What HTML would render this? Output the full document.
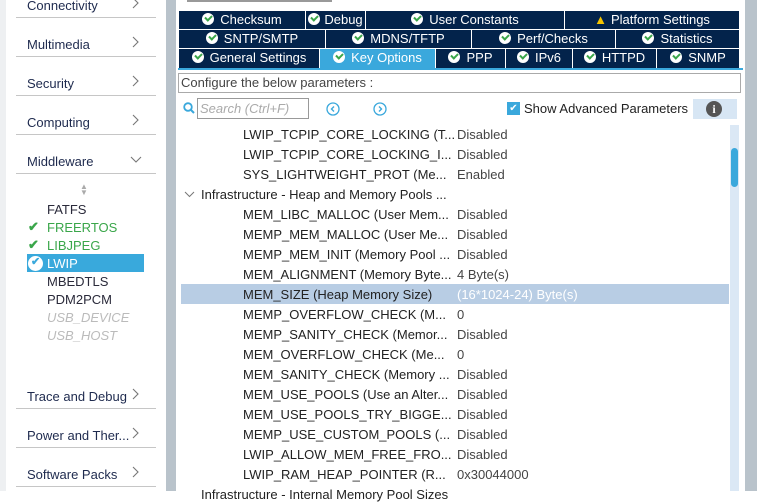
<!DOCTYPE html>
<html><head><style>
*{margin:0;padding:0;box-sizing:border-box}
body{width:757px;height:491px;overflow:hidden;background:#fff;font-family:"Liberation Sans",sans-serif;position:relative;font-size:13px;color:#333}
.a{position:absolute;white-space:nowrap}
.side{left:27px;color:#1e2a4e;font-size:13px}
.chev{left:132px}
.sl{left:16px;width:140px;height:1px;background:#c6c6c6}
.tab{position:absolute;height:18px;background:#03234b;color:#fff;font-size:13px;text-align:center;line-height:18px;border-right:1px solid #fff}
.ck{display:inline-block;width:12px;height:12px;border-radius:50%;background:#fff;vertical-align:-1px;margin-right:6px;position:relative}
.ck:after{content:"";position:absolute;left:3px;top:2px;width:5px;height:3px;border-left:2px solid #3aa64a;border-bottom:2px solid #3aa64a;transform:rotate(-45deg)}
.n{left:243px;color:#222}
.v{left:457px;color:#444}
.g{color:#3aa64a}
</style></head><body>
<div class="a" style="left:0;top:0;width:6px;height:491px;background:#eef0f2"></div>
<div class="a" style="left:166px;top:0;width:10px;height:491px;background:#b9c3cb"></div>
<div class="a" style="left:745px;top:0;width:12px;height:491px;background:#b9c3cb"></div>
<div class="a" style="left:187px;top:0;width:145px;height:2px;background:#999"></div>

<div class="a side" style="top:-2px">Connectivity</div><svg class="a chev" style="top:-3px" width="8" height="12"><path d="M1 1L6 6L1 11" fill="none" stroke="#777" stroke-width="1.1"/></svg>
<div class="a sl" style="top:17px"></div>
<div class="a side" style="top:37px">Multimedia</div><svg class="a chev" style="top:36px" width="8" height="12"><path d="M1 1L6 6L1 11" fill="none" stroke="#777" stroke-width="1.1"/></svg>
<div class="a sl" style="top:56px"></div>
<div class="a side" style="top:76px">Security</div><svg class="a chev" style="top:75px" width="8" height="12"><path d="M1 1L6 6L1 11" fill="none" stroke="#777" stroke-width="1.1"/></svg>
<div class="a sl" style="top:95px"></div>
<div class="a side" style="top:115px">Computing</div><svg class="a chev" style="top:114px" width="8" height="12"><path d="M1 1L6 6L1 11" fill="none" stroke="#777" stroke-width="1.1"/></svg>
<div class="a sl" style="top:134px"></div>
<div class="a side" style="top:154px">Middleware</div><svg class="a" style="left:130px;top:156px" width="12" height="8"><path d="M1 1L6 6L11 1" fill="none" stroke="#777" stroke-width="1.1"/></svg>
<div class="a sl" style="top:173px"></div>
<div class="a" style="left:80px;top:184px;font-size:8px;color:#aaa;line-height:6px">▲<br>▼</div>
<div class="a" style="left:47px;top:202px;color:#2a2a3a">FATFS</div>
<div class="a g" style="left:28px;top:219px;font-weight:bold">✔</div><div class="a g" style="left:47px;top:220px">FREERTOS</div>
<div class="a g" style="left:28px;top:237px;font-weight:bold">✔</div><div class="a g" style="left:47px;top:238px">LIBJPEG</div>
<div class="a" style="left:27px;top:254px;width:117px;height:18px;background:#39a9dc"></div>
<div class="a" style="left:28px;top:256px;width:15px;height:15px;border-radius:50%;background:#fff"></div>
<div class="a" style="left:31px;top:255px;color:#39a9dc;font-size:11px;font-weight:bold">✔</div>
<div class="a" style="left:47px;top:256px;color:#fff">LWIP</div>
<div class="a" style="left:47px;top:274px;color:#2a2a3a">MBEDTLS</div>
<div class="a" style="left:47px;top:292px;color:#2a2a3a">PDM2PCM</div>
<div class="a" style="left:47px;top:310px;color:#bbb;font-style:italic">USB_DEVICE</div>
<div class="a" style="left:47px;top:328px;color:#bbb;font-style:italic">USB_HOST</div>
<div class="a side" style="top:389px">Trace and Debug</div><svg class="a chev" style="top:388px" width="8" height="12"><path d="M1 1L6 6L1 11" fill="none" stroke="#777" stroke-width="1.1"/></svg>
<div class="a sl" style="top:408px"></div>
<div class="a side" style="top:428px">Power and Ther...</div><svg class="a chev" style="top:427px" width="8" height="12"><path d="M1 1L6 6L1 11" fill="none" stroke="#777" stroke-width="1.1"/></svg>
<div class="a sl" style="top:447px"></div>
<div class="a side" style="top:467px">Software Packs</div><svg class="a chev" style="top:466px" width="8" height="12"><path d="M1 1L6 6L1 11" fill="none" stroke="#777" stroke-width="1.1"/></svg>
<div class="a sl" style="top:486px"></div>

<div class="tab" style="left:179px;top:11px;width:127px"><span class="ck"></span>Checksum</div>
<div class="tab" style="left:306px;top:11px;width:60px"><span class="ck" style="margin-right:4px"></span>Debug</div>
<div class="tab" style="left:366px;top:11px;width:199px"><span class="ck"></span>User Constants</div>
<div class="tab" style="left:565px;top:11px;width:175px"><span style="color:#f5c400;margin-right:4px">▲</span>Platform Settings</div>
<div class="tab" style="left:179px;top:30px;width:147px"><span class="ck"></span>SNTP/SMTP</div>
<div class="tab" style="left:326px;top:30px;width:146px"><span class="ck"></span>MDNS/TFTP</div>
<div class="tab" style="left:472px;top:30px;width:144px"><span class="ck"></span>Perf/Checks</div>
<div class="tab" style="left:616px;top:30px;width:124px"><span class="ck"></span>Statistics</div>
<div class="tab" style="left:179px;top:49px;width:141px;height:19px"><span class="ck"></span>General Settings</div>
<div class="tab" style="left:320px;top:49px;width:116px;height:19px;background:#3aa8dc"><span class="ck"></span>Key Options</div>
<div class="tab" style="left:436px;top:49px;width:70px;height:19px"><span class="ck"></span>PPP</div>
<div class="tab" style="left:506px;top:49px;width:67px;height:19px"><span class="ck"></span>IPv6</div>
<div class="tab" style="left:573px;top:49px;width:84px;height:19px"><span class="ck"></span>HTTPD</div>
<div class="tab" style="left:657px;top:49px;width:83px;height:19px"><span class="ck"></span>SNMP</div>
<div class="a" style="left:178px;top:68px;width:565px;height:2px;background:#3aa8dc"></div>
<div class="a" style="left:178px;top:73px;width:563px;height:20px;border:1px solid #aaa;padding-left:2px;line-height:18px;color:#444">Configure the below parameters :</div>

<svg class="a" style="left:183px;top:102px" width="12" height="12"><circle cx="5" cy="5" r="3.8" fill="none" stroke="#3aa8dc" stroke-width="1.8"/><line x1="8" y1="8" x2="11" y2="11" stroke="#3aa8dc" stroke-width="2"/></svg>
<div class="a" style="left:197px;top:98px;width:112px;height:21px;border:1px solid #999;color:#aaa;font-style:italic;padding-left:2px;line-height:19px">Search (Ctrl+F)</div>
<svg class="a" style="left:326px;top:102px" width="14" height="14"><circle cx="7" cy="7" r="6" fill="none" stroke="#3aa8dc" stroke-width="1.3"/><path d="M8 4.5L5.5 7L8 9.5" fill="none" stroke="#3aa8dc" stroke-width="1.4"/></svg>
<svg class="a" style="left:373px;top:102px" width="14" height="14"><circle cx="7" cy="7" r="6" fill="none" stroke="#3aa8dc" stroke-width="1.3"/><path d="M6 4.5L8.5 7L6 9.5" fill="none" stroke="#3aa8dc" stroke-width="1.4"/></svg>
<div class="a" style="left:507px;top:102px;width:13px;height:13px;background:#3aa8dc;color:#fff;font-size:10px;line-height:13px;text-align:center">✔</div>
<div class="a" style="left:524px;top:101px;color:#222">Show Advanced Parameters</div>
<div class="a" style="left:693px;top:99px;width:44px;height:20px;background:#d7e6f4"></div>
<div class="a" style="left:706px;top:101px;width:16px;height:16px;border-radius:50%;background:#555;color:#fff;font-weight:bold;font-size:12px;text-align:center;line-height:16px;font-family:'Liberation Serif',serif">i</div>

<div class="a" style="left:730px;top:125px;width:9px;height:366px;background:#dbe8f5"></div>
<div class="a" style="left:731px;top:148px;width:7px;height:39px;border-radius:4px;background:#3aa8dc"></div>
<div class="a" style="left:181px;top:284px;width:548px;height:20px;background:#b8cde4"></div>

<div class="a n" style="top:127px">LWIP_TCPIP_CORE_LOCKING (T...</div><div class="a v" style="top:127px">Disabled</div>
<div class="a n" style="top:147px">LWIP_TCPIP_CORE_LOCKING_I...</div><div class="a v" style="top:147px">Disabled</div>
<div class="a n" style="top:167px">SYS_LIGHTWEIGHT_PROT (Me...</div><div class="a v" style="top:167px">Enabled</div>
<svg class="a" style="left:184px;top:191px" width="11" height="7"><path d="M1 1L5.5 5.5L10 1" fill="none" stroke="#777" stroke-width="1"/></svg><div class="a" style="left:201px;top:187px;color:#222">Infrastructure - Heap and Memory Pools ...</div>
<div class="a n" style="top:207px">MEM_LIBC_MALLOC (User Mem...</div><div class="a v" style="top:207px">Disabled</div>
<div class="a n" style="top:227px">MEMP_MEM_MALLOC (User Me...</div><div class="a v" style="top:227px">Disabled</div>
<div class="a n" style="top:247px">MEMP_MEM_INIT (Memory Pool ...</div><div class="a v" style="top:247px">Disabled</div>
<div class="a n" style="top:267px">MEM_ALIGNMENT (Memory Byte...</div><div class="a v" style="top:267px">4 Byte(s)</div>
<div class="a n" style="top:287px">MEM_SIZE (Heap Memory Size)</div><div class="a v" style="top:287px;color:#fff">(16*1024-24) Byte(s)</div>
<div class="a n" style="top:307px">MEMP_OVERFLOW_CHECK (M...</div><div class="a v" style="top:307px">0</div>
<div class="a n" style="top:327px">MEMP_SANITY_CHECK (Memor...</div><div class="a v" style="top:327px">Disabled</div>
<div class="a n" style="top:347px">MEM_OVERFLOW_CHECK (Me...</div><div class="a v" style="top:347px">0</div>
<div class="a n" style="top:367px">MEM_SANITY_CHECK (Memory ...</div><div class="a v" style="top:367px">Disabled</div>
<div class="a n" style="top:387px">MEM_USE_POOLS (Use an Alter...</div><div class="a v" style="top:387px">Disabled</div>
<div class="a n" style="top:407px">MEM_USE_POOLS_TRY_BIGGE...</div><div class="a v" style="top:407px">Disabled</div>
<div class="a n" style="top:427px">MEMP_USE_CUSTOM_POOLS (...</div><div class="a v" style="top:427px">Disabled</div>
<div class="a n" style="top:447px">LWIP_ALLOW_MEM_FREE_FRO...</div><div class="a v" style="top:447px">Disabled</div>
<div class="a n" style="top:467px">LWIP_RAM_HEAP_POINTER (R...</div><div class="a v" style="top:467px">0x30044000</div>
<div class="a" style="left:201px;top:487px;color:#222">Infrastructure - Internal Memory Pool Sizes</div>
</body></html>
